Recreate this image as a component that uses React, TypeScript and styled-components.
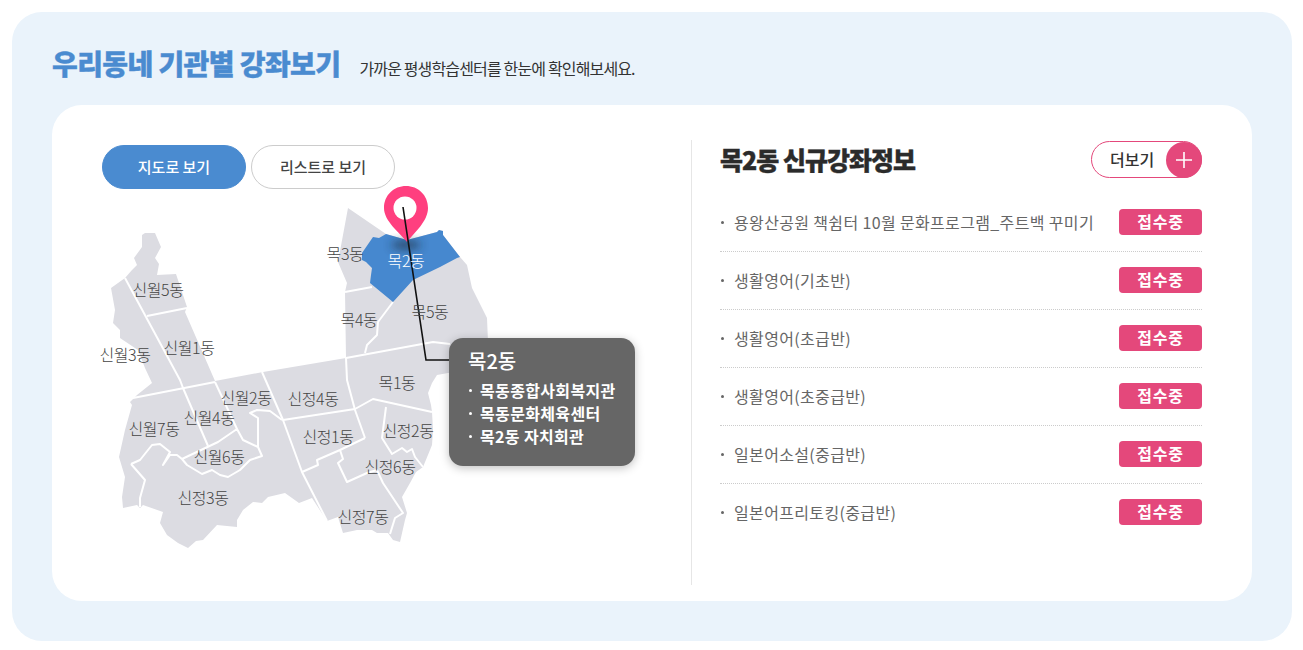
import React from "react";
import styled, { createGlobalStyle } from "styled-components";

const FONT = `"Noto Sans CJK KR", "Noto Sans", sans-serif`;

const Global = createGlobalStyle`
  html, body { margin: 0; padding: 0; background: #fff; }
  body { font-family: ${FONT}; }
  * { box-sizing: border-box; }
`;

const Page = styled.div`
  width: 1303px;
  height: 650px;
  padding: 12px 11px 9px 12px;
  overflow: hidden;
`;
const Panel = styled.section`
  height: 629px;
  background: #eaf3fb;
  border-radius: 30px;
  padding: 31px 40px 40px;
`;
const Header = styled.header`
  display: flex;
  align-items: baseline;
  height: 62px;
  gap: 19px;
`;
const Title = styled.h2`
  margin: 0;
  font-size: 28px;
  line-height: 40px;
  font-weight: 900;
  letter-spacing: -0.6px;
  -webkit-text-stroke: 0.4px #4a8bd0;
  color: #4a8bd0;
`;
const Sub = styled.p`
  margin: 0;
  font-size: 16px;
  line-height: 20px;
  letter-spacing: -0.85px;
  color: #333;
`;
const Card = styled.div`
  display: flex;
  height: 496px;
  background: #fff;
  border-radius: 30px;
  padding: 35px 50px 16px 48px;
`;
const LeftCol = styled.div`
  width: 591px;
  padding-top: 5px;
`;
const Tabs = styled.div`
  display: flex;
  gap: 5px;
  padding-left: 2px;
`;
const Tab = styled.button<{ $active?: boolean }>`
  width: 144px;
  height: 44px;
  border-radius: 22px;
  font-family: ${FONT};
  font-size: 15px;
  font-weight: 500;
  letter-spacing: 0;
  padding: 0 0 2px;
  color: ${(p) => (p.$active ? "#fff" : "#444")};
  background: ${(p) => (p.$active ? "#4a8bd0" : "#fff")};
  border: 1px solid ${(p) => (p.$active ? "#4a8bd0" : "#ccc")};
`;
const MapArea = styled.div`
  position: relative;
  width: 540px;
  height: 372px;
`;
const MapSvg = styled.svg`
  position: absolute;
  left: 0;
  top: 0;
  overflow: visible;
`;
const Label = styled.span<{ $x: number; $y: number; $on?: boolean }>`
  position: absolute;
  left: ${(p) => p.$x - 100 - 48}px;
  top: ${(p) => p.$y - 189 - 10}px;
  width: 96px;
  text-align: center;
  font-size: 16px;
  line-height: 20px;
  font-weight: 300;
  letter-spacing: -0.4px;
  color: ${(p) => (p.$on ? "#fff" : "#444")};
`;
const Tooltip = styled.div`
  position: absolute;
  left: 349px;
  top: 149px;
  width: 186px;
  height: 128px;
  padding: 10px 19px;
  background: #666;
  border-radius: 14px;
  color: #fff;
  box-shadow: 0 2px 10px rgba(0, 0, 0, 0.25);
`;
const TipTitle = styled.div`
  font-size: 20px;
  line-height: 26px;
  font-weight: 500;
  letter-spacing: 0;
  margin-bottom: 5px;
`;
const TipList = styled.ul`
  list-style: none;
  margin: 0;
  padding: 0;
`;
const TipItem = styled.li`
  position: relative;
  padding-left: 12px;
  font-size: 16px;
  line-height: 23px;
  font-weight: 700;
  letter-spacing: 0.35px;
  white-space: nowrap;
  &::before {
    content: "";
    position: absolute;
    left: 1px;
    top: 10px;
    width: 3px;
    height: 3px;
    border-radius: 50%;
    background: #fff;
  }
`;
const RightCol = styled.div`
  flex: 1;
  border-left: 1px solid #e6e6e6;
  padding: 0 0 0 28px;
`;
const RightHead = styled.div`
  display: flex;
  align-items: center;
  justify-content: space-between;
  height: 39px;
  margin-bottom: 15px;
`;
const RightTitle = styled.h3`
  margin: 0;
  font-size: 25px;
  line-height: 39px;
  font-weight: 900;
  letter-spacing: -1px;
  -webkit-text-stroke: 0.4px #2b2b2b;
  color: #2b2b2b;
`;
const More = styled.button`
  display: flex;
  align-items: center;
  justify-content: space-between;
  width: 111px;
  height: 37px;
  padding: 0 0 2px 18px;
  background: #fff;
  border: 1px solid #e4487b;
  border-radius: 19px;
  font-family: ${FONT};
  font-size: 16px;
  font-weight: 500;
  letter-spacing: 0;
  color: #333;
`;
const MoreIcon = styled.span`
  display: flex;
  align-items: center;
  justify-content: center;
  width: 36px;
  height: 36px;
  margin: 2px -1px 0 0;
  border-radius: 50%;
  background: #e4487b;
`;
const List = styled.ul`
  list-style: none;
  margin: 0;
  padding: 0;
`;
const Row = styled.li`
  display: flex;
  align-items: center;
  justify-content: space-between;
  height: 58px;
  padding-bottom: 1px;
  border-bottom: 1px dotted #ccc;
  &:last-child { border-bottom-color: transparent; }
`;
const RowText = styled.span`
  position: relative;
  padding-left: 14px;
  margin-bottom: 1px;
  font-size: 16px;
  font-weight: 400;
  letter-spacing: 0.35px;
  color: #666;
  &::before {
    content: "";
    position: absolute;
    left: 1px;
    top: 11px;
    width: 3px;
    height: 3px;
    border-radius: 50%;
    background: #666;
  }
`;
const Badge = styled.span`
  width: 83px;
  height: 26px;
  border-radius: 4px;
  background: #e4487b;
  color: #fff;
  font-size: 16px;
  font-weight: 700;
  letter-spacing: 0.8px;
  line-height: 25px;
  text-align: center;
`;

const labels: [string, number, number, boolean?][] = [
  ["신월5동", 158, 289],
  ["신월1동", 189, 347],
  ["신월3동", 125, 354],
  ["목3동", 345, 253],
  ["목2동", 406, 260, true],
  ["목4동", 359, 319],
  ["목5동", 430, 311],
  ["목1동", 397, 382],
  ["신월2동", 246, 397],
  ["신정4동", 313, 398],
  ["신월4동", 209, 417],
  ["신월7동", 154, 428],
  ["신정2동", 408, 430],
  ["신정1동", 328, 436],
  ["신월6동", 219, 456],
  ["신정6동", 390, 466],
  ["신정3동", 203, 497],
  ["신정7동", 363, 516],
];

const courses = [
  "용왕산공원 책쉼터 10월 문화프로그램_주트백 꾸미기",
  "생활영어(기초반)",
  "생활영어(초급반)",
  "생활영어(초중급반)",
  "일본어소설(중급반)",
  "일본어프리토킹(중급반)",
];

const OUTLINE =
  "M142,235 L145,233 L155,233 L161,247 L155,258 L159,264 L157,275 L176,274 L187,307 L185,312 L215,381 L263,372 L346,358 L345,292 L347,283 L338,262 L348,208 L386,234 L407,240 L437,232 L439,230 L443,231 L443,235 L460,257 L467,265 L472,288 L487,318 L488,342 L488,370 L448,373 L437,375 L432,383 L428,393 L431,405 L432,412 L433,430 L432,445 L430,450 L423,467 L416,472 L410,483 L402,497 L407,513 L405,520 L400,542 L393,540 L388,533 L377,533 L372,530 L357,530 L343,533 L338,517 L327,521 L312,498 L299,503 L285,493 L268,497 L262,503 L253,502 L243,510 L237,520 L237,527 L217,525 L203,540 L196,541 L188,548 L178,543 L167,535 L160,523 L163,512 L143,505 L140,508 L137,505 L123,508 L122,497 L125,477 L119,457 L125,430 L132,405 L130,402 L137,395 L152,383 L145,368 L138,350 L120,338 L120,330 L113,323 L115,310 L111,288 L125,278 L132,270 L137,265 L134,258 L142,247 Z";
const MOK2 =
  "M362,253 L373,237 L379,238 L386,234 L407,240 L437,232 L439,230 L443,231 L443,235 L460,257 L457,258 L440,267 L413,280 L393,302 L370,283 L371,275 L372,268 L366,262 L362,260 Z";
const LINES = [
  "M125,278 L180,380 L183,388 L208,446",
  "M147,316 L187,308",
  "M133,398 L215,382",
  "M346,358 L433,342 L450,344",
  "M345,292 L372,287",
  "M393,302 L378,322 L377,335 L367,345 L365,353",
  "M346,358 L347,380 L355,410 L365,438",
  "M283,420 L355,409 L373,399 L432,412",
  "M262,372 L283,420 L302,472 L327,521",
  "M365,438 L340,450 L317,460 L318,465 L302,472",
  "M340,450 L343,459 L338,463 L347,482 L367,473 L377,470 L383,483 L403,513 L395,518 L390,534",
  "M386,407 L382,438 L392,454 L402,448 L407,452 L412,449 L415,457 L423,467",
  "M131,464 L145,480 L140,498 L140,507",
  "M131,464 L140,460 L152,445 L160,444 L170,452 L163,465 L170,455 L177,455 L182,459 L218,442 L237,429 L243,440 L258,447 L262,456 L250,460 L240,470 L228,477 L220,475 L212,470 L202,474 L187,465 L182,459",
  "M258,447 L258,418 L250,413 L257,410 L270,411 L282,420",
  "M215,382 L237,429",
];

export default function App() {
  return (
    <Page>
      <Global />
      <Panel>
        <Header>
          <Title>우리동네 기관별 강좌보기</Title>
          <Sub>가까운 평생학습센터를 한눈에 확인해보세요.</Sub>
        </Header>
        <Card>
          <LeftCol>
            <Tabs>
              <Tab $active>지도로 보기</Tab>
              <Tab>리스트로 보기</Tab>
            </Tabs>
            <MapArea>
              <MapSvg width="540" height="372" viewBox="100 189 540 372">
                <defs>
                  <filter id="pinShadow" x="-50%" y="-100%" width="200%" height="300%">
                    <feGaussianBlur stdDeviation="5" />
                  </filter>
                </defs>
                <path d={OUTLINE} fill="#dcdce2" />
                {LINES.map((d) => (
                  <path key={d} d={d} fill="none" stroke="#fff" strokeWidth="2" strokeLinejoin="round" />
                ))}
                <path d={MOK2} fill="#4688cf" />
                <ellipse cx="406" cy="245" rx="15" ry="4" fill="#1f2a3a" opacity="0.75" filter="url(#pinShadow)" />
                <path
                  d="M407,242 C399,232 384,221 384,208 C384,195 394,186 406,186 C418,186 428,195 428,208 C428,221 415,232 407,242 Z"
                  fill="#ff3f7f"
                />
                <circle cx="405" cy="208" r="11.5" fill="#fff" />
                <path d="M403,207 L426,360 L450,360" fill="none" stroke="#111" strokeWidth="1.6" />
              </MapSvg>
              {labels.map(([t, x, y, on]) => (
                <Label key={t} $x={x} $y={y} $on={on}>
                  {t}
                </Label>
              ))}
              <Tooltip>
                <TipTitle>목2동</TipTitle>
                <TipList>
                  <TipItem>목동종합사회복지관</TipItem>
                  <TipItem>목동문화체육센터</TipItem>
                  <TipItem>목2동 자치회관</TipItem>
                </TipList>
              </Tooltip>
            </MapArea>
          </LeftCol>
          <RightCol>
            <RightHead>
              <RightTitle>목2동 신규강좌정보</RightTitle>
              <More>
                더보기
                <MoreIcon>
                  <svg width="16" height="16" viewBox="0 0 16 16">
                    <path d="M8 0 V16 M0 8 H16" stroke="#fff" strokeWidth="1.6" />
                  </svg>
                </MoreIcon>
              </More>
            </RightHead>
            <List>
              {courses.map((c) => (
                <Row key={c}>
                  <RowText>{c}</RowText>
                  <Badge>접수중</Badge>
                </Row>
              ))}
            </List>
          </RightCol>
        </Card>
      </Panel>
    </Page>
  );
}
